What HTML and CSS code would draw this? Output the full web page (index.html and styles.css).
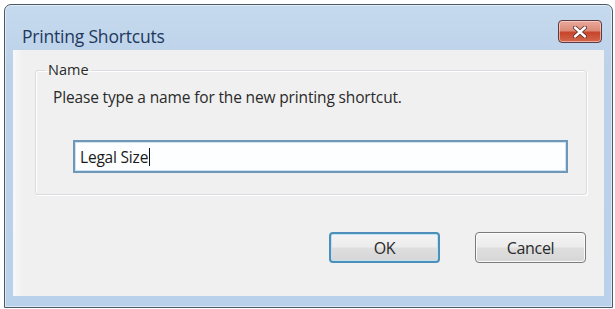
FILE: index.html
```html
<!DOCTYPE html>
<html>
<head>
<meta charset="utf-8">
<link rel="stylesheet" href="styles.css">
</head>
<body>
<div class="window">
  <div class="titlebar">
    <span class="title">Printing Shortcuts</span>
    <div class="close-btn">
      <svg width="14" height="12" viewBox="0 0 14 12"><path d="M2 1.5 L12 10.5 M12 1.5 L2 10.5" stroke="#5a2a2a" stroke-width="4" stroke-linecap="round"/><path d="M2 1.5 L12 10.5 M12 1.5 L2 10.5" stroke="#ffffff" stroke-width="2.4" stroke-linecap="round"/></svg>
    </div>
  </div>
  <div class="client">
    <fieldset class="group">
      <legend class="legend">Name</legend>
      <div class="prompt">Please type a name for the new printing shortcut.</div>
      <div class="input"><span class="input-text">Legal Size</span><span class="caret"></span></div>
    </fieldset>
    <div class="buttons">
      <div class="btn btn-default">OK</div>
      <div class="btn">Cancel</div>
    </div>
  </div>
</div>
</body>
</html>
```
FILE: styles.css
```css
html, body {
  margin: 0;
  padding: 0;
  background: #ffffff;
}
body {
  padding: 4px 0 0 4px;
  font-family: "Open Sans", "Noto Sans", sans-serif;
}
.window {
  box-sizing: border-box;
  width: 609px;
  height: 304px;
  border: 1px solid #4b5866;
  border-radius: 7px 7px 0 0;
  background: linear-gradient(180deg, #c6daee 0%, #bcd2e9 20%, #b9d1ea 100%);
  box-shadow: inset 0 0 0 1px rgba(255,255,255,0.5);
  display: flex;
  flex-direction: column;
  padding: 0 8px 11px 8px;
}
.titlebar {
  height: 45px;
  display: flex;
  align-items: flex-start;
  justify-content: space-between;
  flex-shrink: 0;
  margin: 0 -8px;
  padding: 0 10px 0 17px;
}
.title {
  margin-top: 21px;
  font-size: 17.5px;
  color: #1e395b;
  line-height: 20px;
  letter-spacing: -0.2px;
}
.close-btn {
  margin-top: 15px;
  width: 44px;
  height: 23px;
  box-sizing: border-box;
  border: 1px solid #5b3a44;
  border-radius: 4px;
  background: linear-gradient(180deg, #e9a99c 0%, #dc8a78 45%, #c7452b 55%, #d2674c 100%);
  box-shadow: inset 0 0 0 1px rgba(255,220,210,0.6);
  display: flex;
  align-items: center;
  justify-content: center;
}
.client {
  flex: 1;
  background: linear-gradient(90deg, #f7f8fa 0px, #f0f0f0 10px);
  padding: 12px 17px 0 22px;
  display: flex;
  flex-direction: column;
}
.group {
  margin: 0;
  height: 133px;
  box-sizing: border-box;
  border: 1px solid #d9dde1;
  border-radius: 3px;
  box-shadow: inset 1px 1px 0 #ffffff, 1px 1px 0 #ffffff;
  padding: 0 0 0 17px;
}
.legend {
  padding: 0 2px;
  margin-left: -7px;
  font-size: 14.5px;
  color: #2a2a2a;
  line-height: 16px;
}
.prompt {
  margin-top: 10px;
  font-size: 15.5px;
  color: #2a2a2a;
  line-height: 18px;
  letter-spacing: -0.15px;
}
.input {
  margin-top: 34px;
  margin-left: 20px;
  width: 495px;
  height: 33px;
  box-sizing: border-box;
  border: 2px solid #6f97b8;
  box-shadow: inset 0 0 0 1px #cfe2f1;
  background: #fdfeff;
  display: flex;
  align-items: center;
  padding-left: 5px;
}
.input-text {
  font-size: 15.5px;
  color: #1a1a1a;
  letter-spacing: -0.2px;
}
.caret {
  width: 1px;
  height: 18px;
  background: #111;
  margin-left: 1px;
}
.buttons {
  display: flex;
  justify-content: flex-end;
  gap: 35px;
  margin-top: 37px;
  padding-right: 1px;
}
.btn {
  width: 111px;
  height: 31px;
  box-sizing: border-box;
  border: 1px solid #7a7a7a;
  border-radius: 4px;
  background: linear-gradient(180deg, #f4f4f4 0%, #ececec 48%, #dedede 52%, #d6d6d6 100%);
  box-shadow: inset 0 0 0 1px #fbfbfb;
  display: flex;
  align-items: center;
  justify-content: center;
  font-size: 16px;
  color: #2a2a2a;
  letter-spacing: -0.3px;
}
.btn-default {
  border: 2px solid #4d8fb8;
  box-shadow: inset 0 0 0 1px #bfe3f5;
}
```
